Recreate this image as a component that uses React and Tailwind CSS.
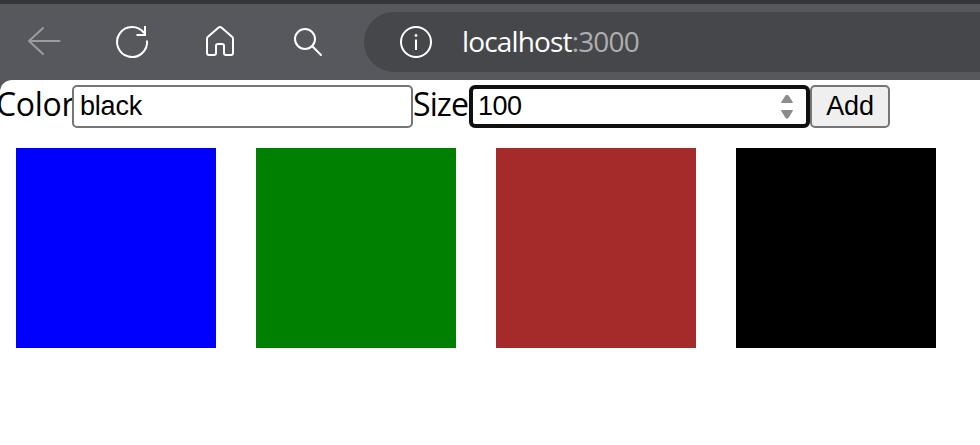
import React from "react";

const squares = ["bg-[#0000ff]", "bg-[#008000]", "bg-[#a52a2a]", "bg-black"];

function Toolbar() {
  return (
    <header className="flex h-20 items-center border-t-4 border-[#35363a] bg-[#57585d] pl-6 text-white">
      <svg className="h-10 w-10 shrink-0 text-[#9b9c9f]" viewBox="24 22 40 40" fill="none" stroke="currentColor" strokeWidth="2" strokeLinecap="round" strokeLinejoin="round">
        <path d="M59.5 41H29M43 28 29 41l14 13" />
      </svg>
      <svg className="ml-12 h-10 w-10 shrink-0" viewBox="112 22 40 40" fill="none" stroke="currentColor" strokeWidth="2" strokeLinejoin="miter">
        <path d="M147 40.500A15 15 0 1 1 144.200 33.200M136.500 35H145V26" />
      </svg>
      <svg className="ml-12 h-10 w-10 shrink-0" viewBox="200 22 40 40" fill="none" stroke="currentColor" strokeWidth="2" strokeLinejoin="round">
        <path d="M207 38.500Q207 37.600 207.700 37L218.600 27.500Q220 26.400 221.400 27.500L232.300 37Q233 37.600 233 38.500V53Q233 55 231 55H226Q224 55 224 53V46Q224 44 222 44H218Q216 44 216 46V53Q216 55 214 55H209Q207 55 207 53Z" />
      </svg>
      <svg className="ml-12 h-10 w-10 shrink-0" viewBox="288 22 40 40" fill="none" stroke="currentColor" strokeWidth="2" strokeLinecap="round">
        <circle cx="305" cy="39" r="10" />
        <path d="m312.300 46.300 8.700 8.700" />
      </svg>
      <div className="ml-9 flex h-[60px] min-w-0 flex-1 items-center rounded-l-full bg-[#46474a] pl-8">
        <svg className="h-10 w-10 shrink-0" viewBox="396 22 40 40" fill="none" stroke="currentColor" strokeWidth="2">
          <circle cx="416" cy="42" r="15" />
          <path d="M416 39.500V50" />
          <circle cx="416" cy="35.500" r="1.400" fill="currentColor" stroke="none" />
        </svg>
        <span className="ml-[26px] whitespace-nowrap pb-0.5 font-['Open_Sans',sans-serif] text-[28px] leading-9 tracking-[-0.85px]">
          localhost<span className="text-[#aeaeb0]">:3000</span>
        </span>
      </div>
    </header>
  );
}

export default function App() {
  return (
    <div className="h-[445px] w-[980px] overflow-hidden bg-[#57585d]">
      <Toolbar />
      <main className="h-[365px] rounded-tl-[12px] bg-white text-black">
        <form className="flex h-[68px] items-start pt-[5px] font-['Liberation_Sans',Arial,sans-serif] text-[27px]" onSubmit={(e) => e.preventDefault()}>
          <label className="-ml-1 w-[76px] shrink-0 whitespace-nowrap font-['Open_Sans',sans-serif] text-[32px] leading-[38px] tracking-[-0.3px]">Color</label>
          <input className="h-[43px] w-[341px] shrink-0 rounded-[5px] border-2 border-[#767676] bg-white px-1.5 tracking-[-0.2px]" defaultValue="black" />
          <label className="w-14 shrink-0 whitespace-nowrap font-['Open_Sans',sans-serif] text-[32px] leading-[38px] tracking-[-0.9px]">Size</label>
          <div className="flex h-[43px] w-[341px] shrink-0 items-center rounded-[6px] border-4 border-[#101010] bg-white pr-[9px] pl-[5px]">
            <input className="min-w-0 flex-1 tracking-[-0.5px] outline-none" defaultValue="100" />
            <svg className="h-7 w-5" viewBox="0 0 20 28" fill="#8b8b8b" stroke="#8b8b8b" strokeLinejoin="round">
              <path d="M9 2.500h2l4.500 7h-11ZM4.500 17.500h11L11 25H9Z" />
            </svg>
          </div>
          <button className="h-[43px] w-20 shrink-0 rounded-[5px] border-2 border-[#767676] bg-[#efefef] pb-0.5 leading-8 tracking-[-0.2px]">Add</button>
        </form>
        <div className="flex gap-10 pl-4">
          {squares.map((color) => (
            <div key={color} className={`h-[200px] w-[200px] shrink-0 ${color}`} />
          ))}
        </div>
      </main>
    </div>
  );
}
